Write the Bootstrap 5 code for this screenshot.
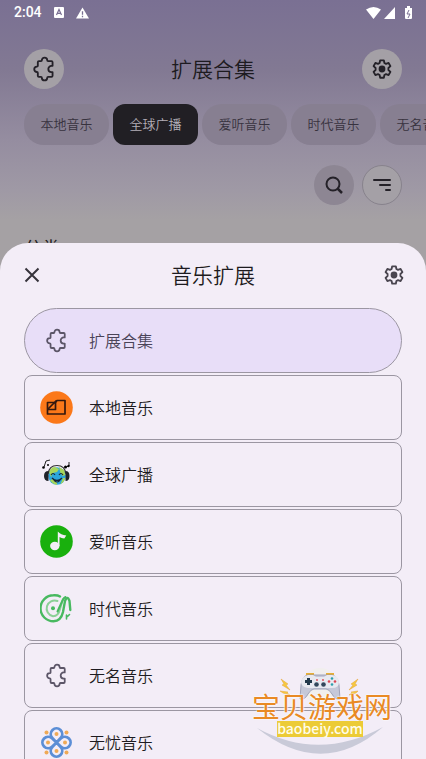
<!DOCTYPE html>
<html lang="zh-CN">
<head>
<meta charset="utf-8">
<meta name="viewport" content="width=device-width, initial-scale=1">
<title>音乐扩展</title>
<link href="https://cdn.jsdelivr.net/npm/bootstrap@5.3.0/dist/css/bootstrap.min.css" rel="stylesheet">
<style>
  body { font-family: "Noto Sans CJK SC", sans-serif; color: #1d1b20; font-weight: 350; }
  .screen { height: 100vh; background: linear-gradient(#7a7093 0, #827993 70px, #958da0 140px, #9f99a5 190px, #a5a1a4 220px, #a5a1a2 100%); }
  .statusbar { height: 25px; padding: 0 14px; color: #fff; font: 500 14px/25px Roboto, sans-serif; }
  .status-left { gap: 12px; }
  .page-pad { padding-left: 24px; padding-right: 24px; }
  .topbar { height: 88px; }
  .title { font-size: 21px; line-height: 32px; font-weight: 350; padding-bottom: 2px; }
  .round-btn { width: 40px; height: 40px; padding: 0; border: 1px solid transparent; border-radius: 50%; color: #242128; background: #a4a0a6; }
  .round-btn.ringed { border-color: #87828c; }
  .round-btn.dim { background: #8d8693; }
  .chips { gap: 4px; margin-top: -9px; }
  .chip { flex: 0 0 auto; height: 41px; padding: 0 16px 1px; min-width: 85px; border: 0; border-radius: 20px; background: #877f91; color: #37323e; font-size: 13px; line-height: 40px; font-weight: 350; white-space: nowrap; }
  .chip.active { background: #211f24; color: #b4afb8; border-radius: 12px; }
  .tools { gap: 8px; margin-top: 20px; }
  .section-name { font-size: 18px; line-height: 24px; margin-top: 30px; font-weight: 400; }
  .sheet { top: 243px; background: #f3edf7; border-radius: 28px 28px 0 0; }
  .sheet-head { height: 65px; padding: 0 20px 2px; }
  .icon-btn { width: 24px; height: 24px; padding: 0; border: 0; background: none; color: #49454f; }
  .sheet-head .icon-btn:first-child { color: #36333b; }
  .sources { gap: 2px; }
  .source { height: 65px; padding: 0 15px; gap: 16px; border: 1px solid #9b96a2; border-radius: 8px; background: transparent; color: #1d1b20; font-size: 16px; font-weight: 350; text-align: left; }
  .source.active { border-radius: 33px; background: #e8def8; color: #4a4458; }
  .source svg { width: 33px; height: 33px; flex: none; margin: 0; color: #5c5668; }
  .source span { padding-bottom: 2px; }
  .watermark { left: 252px; bottom: 4px; width: 140px; height: 84px; pointer-events: none; }
  .watermark svg { width: 140px; height: 84px; overflow: visible; }
  .mark-name { top: 20px; left: 0; font-size: 28px; line-height: 30px; color: #e98a25; font-weight: 400; white-space: nowrap; text-shadow: 0 0 2px #fff, 0 0 2px #fff; }
  .mark-site { top: 50px; left: 25px; width: 86px; height: 16px; background: #eccb36; color: #fffde8; font-size: 14px; line-height: 14px; font-weight: 500; text-align: center; }
  svg { display: block; }
  button svg { margin: auto; }
</style>
<script src="https://cdn.jsdelivr.net/npm/bootstrap@5.3.0/dist/js/bootstrap.bundle.min.js"></script>
</head>
<body class="overflow-hidden">
<svg width="0" height="0" class="position-absolute" aria-hidden="true">
  <symbol id="puzzle" viewBox="0 0 24 24"><path d="M7.300 4.800H9.200q.8 0 .8-.8a2.500 2.500 0 0 1 5 0q0 .8.8.8h3.100q1 0 1 1v3.300h-1a2.900 2.900 0 0 0 0 5.800h1v3.300q0 1-1 1h-3.100q-.8 0-.8.8a2.500 2.500 0 0 1-5 0q0-.8-.8-.8H7.300q-1 0-1-1v-2.600q0-.8-.8-.8a2.500 2.500 0 0 1 0-5q.8 0 .8-.8V5.800q0-1 1-1z" fill="none" stroke="currentColor" stroke-width="1.700" stroke-linejoin="round"/></symbol>
  <symbol id="gear" viewBox="0 0 24 24"><path d="M10 2.500h4l.6 2.900 1.800 1 2.800-1 2 3.500-2.200 2v2.200l2.200 2-2 3.500-2.800-1-1.800 1-.6 2.900h-4l-.6-2.900-1.800-1-2.800 1-2-3.500 2.200-2v-2.200l-2.200-2 2-3.500 2.800 1 1.800-1z" fill="none" stroke="currentColor" stroke-width="2" stroke-linejoin="round"/><circle cx="12" cy="12" r="3.700" fill="currentColor"/></symbol>
</svg>

<div class="screen position-relative overflow-hidden">
  <div class="statusbar d-flex align-items-center justify-content-between">
    <div class="status-left d-flex align-items-center">
      <span>2:04</span>
      <svg width="10" height="11" viewBox="0 0 10 11"><path fill="#fff" d="M1 0h8q1 0 1 1v9q0 1-1 1H1q-1 0-1-1V1q0-1 1-1"/><path d="M2.500 8 5 2.500 7.500 8M3.500 6.300h3" stroke="#7a7093" stroke-width="1.200" fill="none"/></svg>
      <svg width="13" height="12" viewBox="0 0 14 12"><path fill="#fff" d="M7 0l7 12H0z"/><path d="M7 4v4M7 9v1.500" stroke="#7a7093" stroke-width="1.400"/></svg>
    </div>
    <svg width="46" height="14" viewBox="0 0 46 14"><path fill="#fff" d="M0 3.500Q7.500-1.500 15 3.500L7.500 13zM29 1v12H18zM39 2h2V0h3v2h2v10q0 1-1 1h-5q-1 0-1-1z"/><path d="m43 4-2 4h3l-2 4" stroke="#7a7093" fill="none"/></svg>
  </div>

  <header class="topbar page-pad d-flex align-items-center justify-content-between">
    <button class="round-btn" aria-label="扩展"><svg width="26" height="26"><use href="#puzzle"/></svg></button>
    <h1 class="title m-0">扩展合集</h1>
    <button class="round-btn" aria-label="设置"><svg width="22" height="22"><use href="#gear"/></svg></button>
  </header>

  <nav class="chips page-pad d-flex" aria-label="来源">
    <button class="chip">本地音乐</button>
    <button class="chip active">全球广播</button>
    <button class="chip">爱听音乐</button>
    <button class="chip">时代音乐</button>
    <button class="chip">无名音乐</button>
  </nav>

  <div class="tools page-pad d-flex justify-content-end">
    <button class="round-btn dim" aria-label="搜索"><svg width="18" height="18" viewBox="0 0 18 18" fill="none" stroke="currentColor" stroke-width="2"><circle cx="8" cy="8" r="6.500"/><path d="m12.500 12.500 4.500 4.500" stroke-width="2.500"/></svg></button>
    <button class="round-btn ringed" aria-label="排序"><svg width="20" height="16" viewBox="0 0 20 16" fill="none" stroke="currentColor" stroke-width="2" stroke-linecap="round"><path d="M2 3h16M8 8h10M14 13h4"/></svg></button>
  </div>
  <h2 class="section-name page-pad mb-0">分类</h2>

  <section class="sheet position-absolute start-0 end-0 bottom-0 overflow-hidden" aria-label="音乐扩展">
    <div class="sheet-head d-flex align-items-center justify-content-between">
      <button class="icon-btn" aria-label="关闭"><svg width="16" height="16" viewBox="0 0 16 16"><path d="m1.500 1.500 13 13M14.500 1.500l-13 13" stroke="currentColor" stroke-width="2"/></svg></button>
      <h2 class="title m-0">音乐扩展</h2>
      <button class="icon-btn" aria-label="设置"><svg width="22" height="22"><use href="#gear"/></svg></button>
    </div>
    <div class="sources page-pad d-flex flex-column">
      <button class="source active d-flex align-items-center"><svg viewBox="0 0 33 33"><use href="#puzzle" x="4" y="4" width="25" height="25"/></svg><span>扩展合集</span></button>
      <button class="source d-flex align-items-center"><svg viewBox="0 0 33 33"><circle cx="16.500" cy="16.500" r="16.300" fill="#fb7819"/><g fill="none" stroke="#33180f" stroke-width="1.700" stroke-linejoin="round"><path d="M7.500 11.500h8l1.500-2h8v13.500H7.500z"/><path d="M7.500 18.500h8v-7M7.500 18.500l9-9"/></g></svg><span>本地音乐</span></button>
      <button class="source d-flex align-items-center"><svg viewBox="0 0 33 33"><circle cx="17" cy="18" r="8.800" fill="#2ba6dc"/><path d="M9 14q2-5 6-5l4 2-2 3-4 1-2 4zM19 9l5 3 1.500 5-3 1-2-3zM10 22l4-1 3 4v2q-5-1-7-5M23 20l2.500 0q-2 5-5 6z" fill="#a7d65b"/><path d="M8 16Q9 7.500 17 7.500T26 16" fill="none" stroke="#333" stroke-width="1.200"/><path d="M8.500 13v10Q4 23 4 18t4.500-5M25.500 13v10q4 0 4-5t-4-5" fill="#20232a"/><path d="M11 17q2-3 4 0M19 17q2-3 4 0M12 20q5 5 10 0M13 21q4 6 8 0" fill="none" stroke="#162536" stroke-width="1.200"/><g fill="none" stroke="#222" stroke-width="1"><path d="M4 9l2-6 4-1M26 9l3-1V4"/></g><circle cx="3.500" cy="9.500" r="1.300"/><circle cx="8" cy="7" r="1"/><circle cx="25.500" cy="9" r="1.500"/><circle cx="28.500" cy="8" r="1.200"/></svg><span>全球广播</span></button>
      <button class="source d-flex align-items-center"><svg viewBox="0 0 33 33"><circle cx="16.500" cy="16.500" r="16.300" fill="#19b00d"/><ellipse cx="14.800" cy="21" rx="4.700" ry="4.200" fill="#f3edf7"/><path d="M17.800 21V6.500q3 3.500 8.500 4l-2 3q-3-.3-4.800-1.500v9z" fill="#f3edf7"/></svg><span>爱听音乐</span></button>
      <button class="source d-flex align-items-center"><svg viewBox="0 0 33 33" fill="none" stroke="#48b960" stroke-linecap="round"><path d="M20 4.500Q17.500 3 13.500 3.300A13 13 0 0 0 13.500 29.300Q21 29 23 20L25 9q2.500-6 4.500 0l.8 9" stroke-width="2.400"/><path d="M17.500 9A8 8 0 1 0 13 24.300Q18.500 24 20 17L23 7" stroke-width="2" stroke="#8bd096"/><path d="M17.500 19.500L22.500 8.500q1.500-3 3-3.500" stroke-width="2"/><circle cx="13" cy="16.300" r="2" fill="#48b960" stroke="none"/><path d="M26.500 23v4M29.500 22.500l-2 2" stroke-width="1.600"/></svg><span>时代音乐</span></button>
      <button class="source d-flex align-items-center"><svg viewBox="0 0 33 33"><use href="#puzzle" x="4" y="4" width="25" height="25"/></svg><span>无名音乐</span></button>
      <button class="source d-flex align-items-center"><svg viewBox="0 0 33 33"><g fill="none" stroke="#5b8ed6" stroke-width="2.800"><path d="M16.500 16.500l-4.200-4.500a5.700 5.700 0 1 1 8.400 0l-8.400 9a5.700 5.700 0 1 0 8.400 0zM16.500 16.500l-4.500-4.200a5.700 5.700 0 1 0 0 8.400l9-8.400a5.700 5.700 0 1 1 0 8.400z"/></g><g fill="#efaa56"><circle cx="16.500" cy="8" r="2"/><circle cx="16.500" cy="25" r="2"/><circle cx="8" cy="16.500" r="2"/><circle cx="25" cy="16.500" r="2"/><circle cx="6.500" cy="6.500" r="2"/><circle cx="26.500" cy="6.500" r="2"/><circle cx="6.500" cy="26.500" r="2"/><circle cx="26.500" cy="26.500" r="2"/></g></svg><span>无忧音乐</span></button>
    </div>
  </section>

  <div class="watermark position-absolute">
    <svg viewBox="0 0 140 84">
      <circle cx="68" cy="15" r="18" fill="#f1efee"/>
      <path d="M5 57q62 34 126-1-61 53-126 1" fill="#c9cad8"/>
      <path d="M55 4V3h6v1M75 4V3h6v1" fill="none" stroke="#e7ae36" stroke-width="2"/>
      <path d="M56 4h24q6 1 7 10l1 14q-5 1-8-5-3-5-6-5H62q-3 0-6 5-3 6-8 5l1-14q1-9 7-10" fill="#c5c8d8" stroke="#8f93ab" stroke-width=".8"/>
      <path d="M56 4h5l3 2h8l3-2h5q7 1 7 7t-7 6H56q-7-1-7-6t7-7" fill="#e8e9f0"/>
      <path d="M55 7h3v2h2v3h-2v2h-3v-2h-2V9h2z" fill="#22394b"/>
      <g fill="#dc4552"><circle cx="77" cy="10.500" r="1.300"/><circle cx="83" cy="10.500" r="1.300"/><circle cx="65" cy="9" r=".9"/><circle cx="71" cy="9" r=".9"/></g>
      <g fill="#2c9fac"><circle cx="80" cy="7.500" r="1.300"/><circle cx="80" cy="13.500" r="1.300"/></g>
      <g fill="#32475b"><circle cx="64.500" cy="13.500" r="2.300"/><circle cx="71.500" cy="13.500" r="2.300"/></g>
      <path d="M29 8l7 5-2 1 4 5-8-5 2-1zM28 20l8 1-1 1 3 2-7-2zM106 8l-7 5 2 1-4 5 8-5-2-1zM106 20l-7 1 1 1-3 2 7-2z" fill="#f6c93d" stroke="#e4a33b" stroke-width=".5"/>
    </svg>
    <div class="mark-name position-absolute">宝贝游戏网</div>
    <div class="mark-site position-absolute">baobeiy.com</div>
  </div>
</div>
</body>
</html>
